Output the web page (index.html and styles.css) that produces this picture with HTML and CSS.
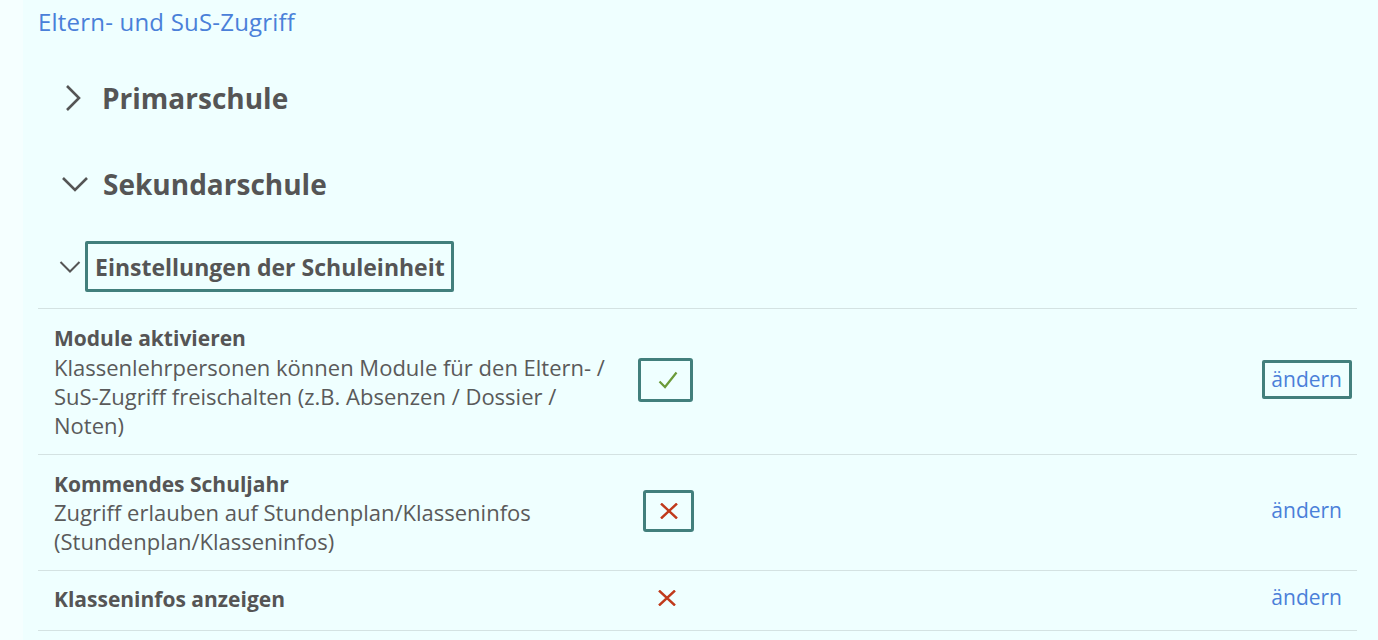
FILE: index.html
```html
<!DOCTYPE html>
<html lang="de">
<head>
<meta charset="utf-8">
<title>Eltern- und SuS-Zugriff</title>
<link rel="stylesheet" href="styles.css">
</head>
<body>
<div class="page">
  <main class="panel">
    <a class="crumb" href="#">Eltern- und SuS-Zugriff</a>

    <section class="group group-first">
      <h2 class="group-head">
        <svg class="chev-right" width="18" height="28" viewBox="0 0 18 28"><path d="M3 2 L15 14 L3 26" fill="none" stroke="#555" stroke-width="2.6"/></svg>
        <span>Primarschule</span>
      </h2>
    </section>

    <section class="group">
      <h2 class="group-head">
        <svg class="chev-down" width="28" height="18" viewBox="0 0 28 18"><path d="M2 3 L14 15 L26 3" fill="none" stroke="#555" stroke-width="2.6"/></svg>
        <span>Sekundarschule</span>
      </h2>
    </section>

    <section class="unit">
      <h3 class="unit-head">
        <svg class="chev-small" width="22" height="14" viewBox="0 0 22 14"><path d="M1.5 2 L11 11.5 L20.5 2" fill="none" stroke="#555" stroke-width="2"/></svg>
        <span class="focus-box">Einstellungen der Schuleinheit</span>
      </h3>

      <div class="rows">
        <div class="row">
          <div class="desc">
            <div class="title">Module aktivieren</div>
            <div class="text">Klassenlehrpersonen können Module für den Eltern- / SuS-Zugriff freischalten (z.B. Absenzen / Dossier / Noten)</div>
          </div>
          <div class="state"><span class="icon-focus check-focus"><svg width="20" height="18" viewBox="0 0 20 18"><path d="M1.5 10.5 L7 16 L18.5 1.5" fill="none" stroke="#6b9a38" stroke-width="2.2"/></svg></span></div>
          <div class="action"><a href="#" class="edit edit-focus">ändern</a></div>
        </div>
        <div class="row">
          <div class="desc">
            <div class="title">Kommendes Schuljahr</div>
            <div class="text">Zugriff erlauben auf Stundenplan/Klasseninfos (Stundenplan/Klasseninfos)</div>
          </div>
          <div class="state"><span class="icon-focus x-focus"><svg width="18" height="16" viewBox="0 0 18 16"><path d="M1 0.5 L17 15.5 M17 0.5 L1 15.5" fill="none" stroke="#c03a1c" stroke-width="2.4"/></svg></span></div>
          <div class="action"><a href="#" class="edit">ändern</a></div>
        </div>
        <div class="row row-single">
          <div class="desc">
            <div class="title">Klasseninfos anzeigen</div>
          </div>
          <div class="state"><span class="icon-plain"><svg width="18" height="16" viewBox="0 0 18 16"><path d="M1 0.5 L17 15.5 M17 0.5 L1 15.5" fill="none" stroke="#c03a1c" stroke-width="2.4"/></svg></span></div>
          <div class="action"><a href="#" class="edit">ändern</a></div>
        </div>
      </div>
    </section>
  </main>
</div>
</body>
</html>
```

FILE: styles.css
```css
html, body {
  margin: 0;
  padding: 0;
  background: #f5ffff;
}
body {
  font-family: "Open Sans", "Lato", sans-serif;
  color: #565656;
}
.page {
  padding-left: 23px;
  min-height: 640px;
}
.panel {
  background: #efffff;
  min-height: 640px;
  padding: 8px 21px 0 15px;
}
.crumb {
  display: block;
  font-size: 24px;
  letter-spacing: 0.2px;
  line-height: 28px;
  color: #4a80d9;
  text-decoration: none;
}
.group-head {
  margin: 26px 0 0 0;
  display: flex;
  align-items: center;
  font-size: 28px;
  font-weight: 700;
  color: #555;
  height: 60px;
}
.group-first .group-head {
  margin-top: 32px;
}
.chev-right {
  margin-left: 26px;
  margin-right: 20px;
}
.chev-down {
  margin-left: 23px;
  margin-right: 14px;
}
.unit-head {
  margin: 27px 0 0 0;
  display: flex;
  align-items: center;
  height: 51px;
  font-size: 23px;
  font-weight: 700;
  color: #555;
}
.chev-small {
  margin-left: 21px;
  margin-right: 4px;
}
.focus-box {
  display: inline-flex;
  align-items: center;
  height: 45px;
  padding: 0 6px 0 7px;
  border: 3px solid #427f7c;
  border-radius: 2px;
}
.rows {
  margin-top: 16px;
  border-top: 1px solid #d4e2e2;
}
.row {
  display: grid;
  grid-template-columns: 584px 70px 1fr;
  align-items: center;
  border-bottom: 1px solid #d4e2e2;
  padding: 15px 15px 14px 16px;
  font-size: 22px;
  line-height: 29px;
}
.row-single {
  padding-top: 14px;
  padding-bottom: 16px;
}
.title {
  font-weight: 700;
  font-size: 21px;
  line-height: 28.5px;
  color: #555;
}
.text {
  color: #5a5a5a;
  padding-right: 10px;
}
.state {
  display: flex;
  transform: translateY(-2px);
}
.icon-focus {
  display: inline-flex;
  align-items: center;
  justify-content: center;
  border: 3px solid #427f7c;
  border-radius: 3px;
  box-sizing: border-box;
}
.check-focus {
  width: 55px;
  height: 44px;
  padding-left: 5px;
}
.x-focus {
  width: 51px;
  height: 42px;
  margin-left: 5px;
}
.icon-plain {
  display: inline-flex;
  margin-left: 20px;
}
.action {
  display: flex;
  justify-content: flex-end;
  transform: translateY(-2px);
}
.edit {
  color: #4a80d9;
  text-decoration: none;
  font-size: 21px;
  line-height: 29px;
  display: inline-block;
}
.edit-focus {
  border: 3px solid #427f7c;
  border-radius: 2px;
  padding: 2px 7px 2px 6px;
  margin-right: -10px;
}
```
